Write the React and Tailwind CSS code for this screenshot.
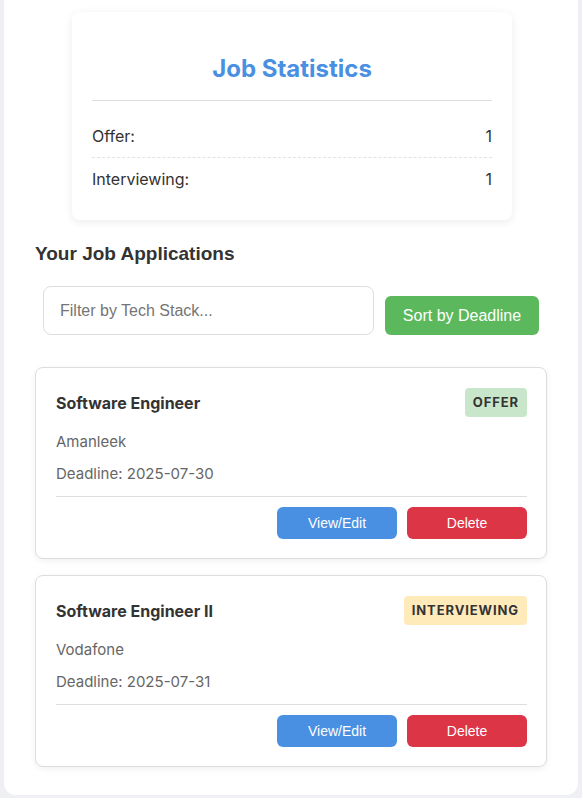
const stats = [
  { label: 'Offer:', count: 1 },
  { label: 'Interviewing:', count: 1 },
]

const jobs = [
  { title: 'Software Engineer', company: 'Amanleek', deadline: '2025-07-30', status: 'OFFER', badge: 'bg-[#c8e6c9]' },
  { title: 'Software Engineer II', company: 'Vodafone', deadline: '2025-07-31', status: 'INTERVIEWING', badge: 'bg-[#ffeaba]' },
]

function JobCard({ job }) {
  return (
    <div className="bg-white border border-[#dddddd] rounded-[8px] shadow-[0_2px_6px_rgba(0,0,0,0.06)] pl-[20px] pr-[19px] pt-[20px] pb-[19px]">
      <div className="flex items-center justify-between h-[29px]">
        <h3 className="text-[16px] font-bold text-[#333]">{job.title}</h3>
        <span className={`${job.badge} text-[#333] text-[13px] font-bold tracking-[0.9px] px-[8px] h-[29px] flex items-center rounded-[4px]`}>
          {job.status}
        </span>
      </div>
      <p className="mt-[14px] text-[15px] leading-[22px] text-[#666]">{job.company}</p>
      <p className="mt-[10px] text-[15px] leading-[22px] text-[#666]">Deadline: {job.deadline}</p>
      <div className="mt-[11px] border-t border-[#dddddd] pt-[10px] flex justify-end gap-[10px] font-['Liberation_Sans',Arial,sans-serif]">
        <button className="w-[120px] h-[32px] rounded-[6px] bg-[#4a90e2] text-white text-[14px]">View/Edit</button>
        <button className="w-[120px] h-[32px] rounded-[6px] bg-[#dc3545] text-white text-[14px]">Delete</button>
      </div>
    </div>
  )
}

export default function App() {
  return (
    <div className="min-h-screen bg-[#eef0f3] px-[4px] pb-[3px] font-['Inter',sans-serif] text-[#333]">
      <div className="bg-white rounded-b-[12px] px-[31px] pt-[12px] pb-[28px]">
        {/* Stats */}
        <div className="ml-[37px] w-[440px] bg-white rounded-[8px] shadow-[0_2px_10px_rgba(0,0,0,0.08)] px-[20px] pb-[20px]">
          <h2 className="pt-[43px] text-center text-[24px] leading-[28px] font-bold text-[#4a90e2] pb-[17px] border-b border-[#dddddd]">
            Job Statistics
          </h2>
          <div className="mt-[14px]">
            {stats.map((s, i) => (
              <div
                key={s.label}
                className={`flex justify-between py-[10px] text-[16px] leading-[22px] ${i === 0 ? 'border-b border-dashed border-[#e2e2e2]' : ''}`}
              >
                <span>{s.label}</span>
                <span>{s.count}</span>
              </div>
            ))}
          </div>
        </div>

        <h2 className="mt-[23px] text-[19px] leading-[21px] font-bold text-[#333] font-['Liberation_Sans',Arial,sans-serif]">
          Your Job Applications
        </h2>

        {/* Filter row */}
        <div className="mt-[22px] mx-[8px] flex items-end gap-[11px] font-['Liberation_Sans',Arial,sans-serif]">
          <input
            type="text"
            placeholder="Filter by Tech Stack..."
            className="w-[331px] h-[49px] border border-[#dddddd] rounded-[8px] px-[16px] text-[16px] placeholder:text-[#757575] outline-none"
          />
          <button className="flex-1 h-[39px] rounded-[6px] bg-[#5cb85c] text-white text-[16px]">Sort by Deadline</button>
        </div>

        <div className="mt-[32px] flex flex-col gap-[16px]">
          {jobs.map(job => <JobCard key={job.title} job={job} />)}
        </div>
      </div>
    </div>
  )
}
